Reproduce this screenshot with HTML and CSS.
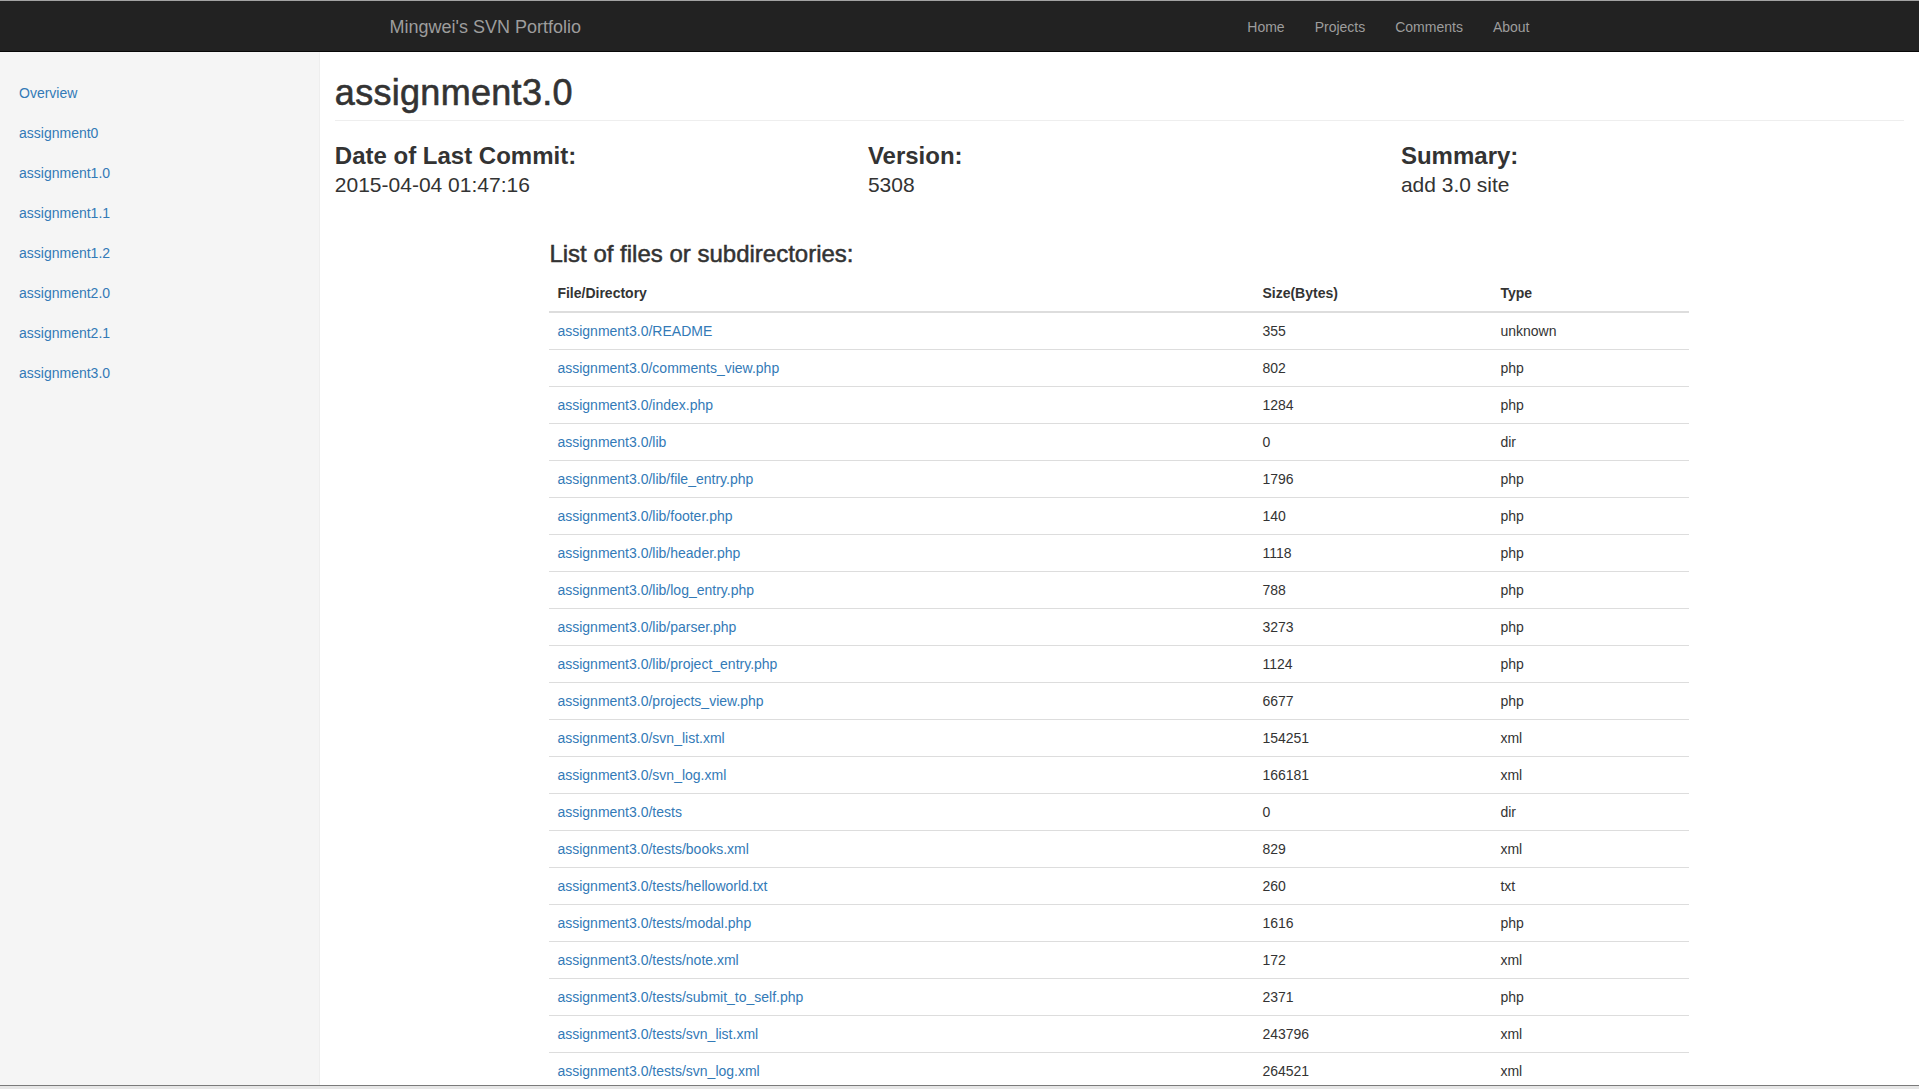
FILE: index.html
```html
<!DOCTYPE html>
<html lang="en">
<head>
<meta charset="utf-8">
<title>Mingwei's SVN Portfolio</title>
<link rel="stylesheet" href="styles.css">
</head>
<body>
<header class="navbar">
  <div class="container nav-inner">
    <a class="brand" href="#">Mingwei's SVN Portfolio</a>
    <ul class="nav-links">
      <li><a href="#">Home</a></li>
      <li><a href="#">Projects</a></li>
      <li><a href="#">Comments</a></li>
      <li><a href="#">About</a></li>
    </ul>
  </div>
</header>
<div class="layout">
  <aside class="sidebar">
    <ul class="nav-sidebar">
      <li><a href="#">Overview</a></li>
      <li><a href="#">assignment0</a></li>
      <li><a href="#">assignment1.0</a></li>
      <li><a href="#">assignment1.1</a></li>
      <li><a href="#">assignment1.2</a></li>
      <li><a href="#">assignment2.0</a></li>
      <li><a href="#">assignment2.1</a></li>
      <li><a href="#">assignment3.0</a></li>
    </ul>
  </aside>
  <main class="main">
    <h1 class="page-header">assignment3.0</h1>
    <div class="meta-row">
      <div class="meta-col">
        <h3 class="meta-label">Date of Last Commit:</h3>
        <p class="meta-value">2015-04-04 01:47:16</p>
      </div>
      <div class="meta-col">
        <h3 class="meta-label">Version:</h3>
        <p class="meta-value">5308</p>
      </div>
      <div class="meta-col">
        <h3 class="meta-label">Summary:</h3>
        <p class="meta-value">add 3.0 site</p>
      </div>
    </div>
    <div class="files">
      <h3 class="files-title">List of files or subdirectories:</h3>
      <table class="file-table">
        <thead>
          <tr><th class="c-name">File/Directory</th><th class="c-size">Size(Bytes)</th><th class="c-type">Type</th></tr>
        </thead>
        <tbody>
          <tr><td><a href="#">assignment3.0/README</a></td><td>355</td><td>unknown</td></tr>
          <tr><td><a href="#">assignment3.0/comments_view.php</a></td><td>802</td><td>php</td></tr>
          <tr><td><a href="#">assignment3.0/index.php</a></td><td>1284</td><td>php</td></tr>
          <tr><td><a href="#">assignment3.0/lib</a></td><td>0</td><td>dir</td></tr>
          <tr><td><a href="#">assignment3.0/lib/file_entry.php</a></td><td>1796</td><td>php</td></tr>
          <tr><td><a href="#">assignment3.0/lib/footer.php</a></td><td>140</td><td>php</td></tr>
          <tr><td><a href="#">assignment3.0/lib/header.php</a></td><td>1118</td><td>php</td></tr>
          <tr><td><a href="#">assignment3.0/lib/log_entry.php</a></td><td>788</td><td>php</td></tr>
          <tr><td><a href="#">assignment3.0/lib/parser.php</a></td><td>3273</td><td>php</td></tr>
          <tr><td><a href="#">assignment3.0/lib/project_entry.php</a></td><td>1124</td><td>php</td></tr>
          <tr><td><a href="#">assignment3.0/projects_view.php</a></td><td>6677</td><td>php</td></tr>
          <tr><td><a href="#">assignment3.0/svn_list.xml</a></td><td>154251</td><td>xml</td></tr>
          <tr><td><a href="#">assignment3.0/svn_log.xml</a></td><td>166181</td><td>xml</td></tr>
          <tr><td><a href="#">assignment3.0/tests</a></td><td>0</td><td>dir</td></tr>
          <tr><td><a href="#">assignment3.0/tests/books.xml</a></td><td>829</td><td>xml</td></tr>
          <tr><td><a href="#">assignment3.0/tests/helloworld.txt</a></td><td>260</td><td>txt</td></tr>
          <tr><td><a href="#">assignment3.0/tests/modal.php</a></td><td>1616</td><td>php</td></tr>
          <tr><td><a href="#">assignment3.0/tests/note.xml</a></td><td>172</td><td>xml</td></tr>
          <tr><td><a href="#">assignment3.0/tests/submit_to_self.php</a></td><td>2371</td><td>php</td></tr>
          <tr><td><a href="#">assignment3.0/tests/svn_list.xml</a></td><td>243796</td><td>xml</td></tr>
          <tr><td><a href="#">assignment3.0/tests/svn_log.xml</a></td><td>264521</td><td>xml</td></tr>
        </tbody>
      </table>
    </div>
  </main>
</div>
<div class="window-edge"></div>
</body>
</html>
```

FILE: styles.css
```css
html {
  overflow: hidden;
}
* {
  box-sizing: border-box;
}
body {
  margin: 0;
  font-family: "Liberation Sans", Arial, Helvetica, sans-serif;
  font-size: 14px;
  line-height: 20px;
  color: #333;
  background: #fff;
}
a {
  color: #337ab7;
  text-decoration: none;
}
ul {
  list-style: none;
  margin: 0;
  padding: 0;
}

/* Navbar */
.navbar {
  background: #222;
  border-top: 1px solid #a3a3a3;
  border-bottom: 1px solid #080808;
  height: 52px;
}
.container {
  width: 1170px;
  margin: 0 auto;
  padding: 0 15px;
}
.nav-inner {
  display: flex;
  justify-content: space-between;
  align-items: flex-start;
}
.brand {
  display: block;
  margin-left: -15px;
  padding: 16px 15px 14px;
  font-size: 18px;
  line-height: 20px;
  color: #9d9d9d;
}
.nav-links {
  display: flex;
  margin-right: -15px;
}
.nav-links a {
  display: block;
  padding: 16px 15px 14px;
  font-size: 14px;
  line-height: 20px;
  color: #9d9d9d;
}

/* Layout */
.layout {
  display: flex;
  align-items: stretch;
}
.sidebar {
  flex: 0 0 16.66667%;
  padding: 21px 20px 20px;
  background: #f5f5f5;
  border-right: 1px solid #eee;
}
.nav-sidebar {
  margin: 0 -21px 20px -20px;
}
.nav-sidebar a {
  display: block;
  padding: 10px 19px;
  line-height: 20px;
}
.main {
  flex: 1 1 auto;
  min-width: 0;
  padding: 21px 15px 0;
}

/* Page header */
.page-header {
  margin: 0 0 20px;
  padding-bottom: 7px;
  border-bottom: 1px solid #eee;
  font-size: 36px;
  line-height: 1.1;
  font-weight: 500;
  letter-spacing: 0.3px;
  -webkit-text-stroke: 0.6px #333;
  color: #333;
}

/* Meta */
.meta-row {
  display: grid;
  grid-template-columns: repeat(3, 1fr);
  margin: 0 -15px;
}
.meta-col {
  padding: 0 15px;
}
.meta-label {
  margin: 2px 0 1px;
  font-size: 24px;
  line-height: 1.1;
  font-weight: bold;
  color: #333;
}
.meta-value {
  margin: 0 0 20px;
  font-size: 21px;
  line-height: 1.4;
  font-weight: 300;
}

/* Files */
.files {
  width: 1170px;
  margin: 0 auto;
  padding: 0 15px;
}
.files-title {
  margin: 22px 0 7px;
  font-size: 24px;
  line-height: 1.1;
  font-weight: 500;
  -webkit-text-stroke: 0.5px #333;
  color: #333;
}
.file-table {
  width: 100%;
  border-collapse: collapse;
  border-spacing: 0;
}
.file-table th {
  text-align: left;
  font-weight: bold;
  padding: 8px;
  line-height: 20px;
  vertical-align: bottom;
  border-bottom: 2px solid #ddd;
}
.file-table td {
  padding: 8px;
  line-height: 20px;
  vertical-align: top;
  border-top: 1px solid #ddd;
}
.c-name { width: 705px; }
.c-size { width: 238px; }

/* Bottom window edge */
.window-edge {
  position: fixed;
  left: 0;
  right: 0;
  bottom: 0;
  height: 4px;
  border-top: 1px solid #7a7a7a;
  background: #e6e6e6;
}
```
